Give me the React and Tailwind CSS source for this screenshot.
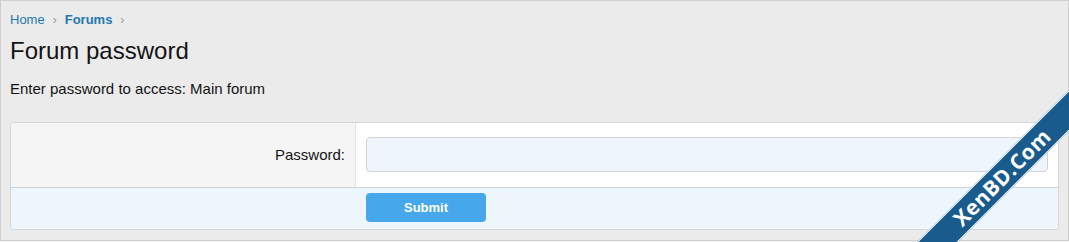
export default function App() {
  return (
    <div className="relative w-[1069px] h-[242px] overflow-hidden bg-[#f0f0f0]" style={{ fontFamily: '"Liberation Sans", Arial, sans-serif' }}>
      <div className="h-[241px] border border-[#cfcfcf] bg-[#ebebeb] px-[9px]">
        <div className="flex items-center gap-[8px] pt-[11px] text-[13px] leading-[16px]">
          <span className="text-[#2577b1]">Home</span>
          <span className="text-[#9a9a9a] text-[12px]">›</span>
          <span className="font-bold text-[#2577b1]">Forums</span>
          <span className="text-[#9a9a9a] text-[12px]">›</span>
        </div>
        <h1 className="mt-[9px] text-[24px] leading-[28px] text-[#141414]">Forum password</h1>
        <p className="mt-[15px] text-[15px] leading-[18px] text-[#141414]">Enter password to access: Main forum</p>
        <div className="mt-[24px] rounded-[3px] border border-[#d6d6d6] overflow-hidden">
          <div className="flex border-b border-[#d3d3d3]">
            <div className="w-[345px] shrink-0 bg-[#f5f5f5] border-r border-[#e2e2e2] flex items-center justify-end pr-[10px] text-[15px] text-[#141414]">
              Password:
            </div>
            <div className="flex-1 bg-[#fefefe] px-[10px] pt-[14px] pb-[15px]">
              <div className="h-[35px] rounded-[4px] border border-[#d3d3d3] bg-[#eef5fd]"></div>
            </div>
          </div>
          <div className="flex bg-[#edf5fd] h-[41px]">
            <div className="w-[345px] shrink-0"></div>
            <div className="pl-[10px] pt-[5px]">
              <button className="w-[120px] h-[29px] rounded-[4px] bg-[#47a7eb] text-white text-[13px] font-bold">Submit</button>
            </div>
          </div>
        </div>
      </div>
      <div className="absolute left-[842px] top-[163px] w-[320px] h-[29px] -rotate-45 bg-[#185b8c] border-y-[1.5px] border-white flex items-center justify-center">
        <span className="text-white text-[21px] font-bold leading-none tracking-[0.5px]" style={{ fontFamily: '"Open Sans", sans-serif' }}>XenBD.Com</span>
      </div>
    </div>
  );
}
